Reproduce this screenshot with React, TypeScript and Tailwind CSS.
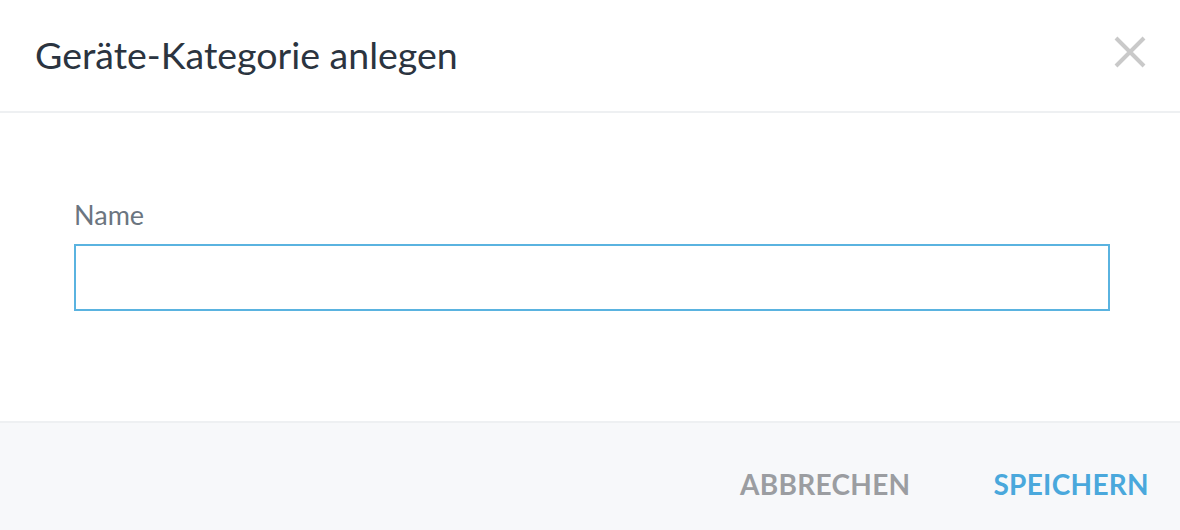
export default function App() {
  return (
    <div className="w-[1180px] h-[530px] bg-white flex flex-col" style={{ fontFamily: "Lato, 'Noto Sans', sans-serif" }}>
      <div className="h-[113px] shrink-0 flex items-center justify-between pl-[35px] pr-[34px] border-b-2 border-[#eef0f2]">
        <h1 className="text-[37.5px] leading-none text-[#2b3440] font-normal pb-[2px]">Geräte-Kategorie anlegen</h1>
        <svg width="32" height="32" viewBox="0 0 32 32" className="mt-[-8px]">
          <path d="M2 2 L30 30 M30 2 L2 30" stroke="#c9c9c9" strokeWidth="4" />
        </svg>
      </div>
      <div className="flex-1 pt-[88px] px-[74px]">
        <label className="block text-[27px] leading-none text-[#6b7580] mb-[16px]">Name</label>
        <div className="w-[1036px] h-[67px] border-2 border-[#5ab3e0]" />
      </div>
      <div className="h-[109px] shrink-0 bg-[#f7f8fa] border-t-2 border-[#eef0f2] flex items-center justify-end pr-[31px] pt-[14px] gap-[83px]">
        <span className="text-[28px] font-bold tracking-[0.3px] text-[#9b9da1]">ABBRECHEN</span>
        <span className="text-[28px] font-bold tracking-[0.3px] text-[#4aa8dc]">SPEICHERN</span>
      </div>
    </div>
  );
}
